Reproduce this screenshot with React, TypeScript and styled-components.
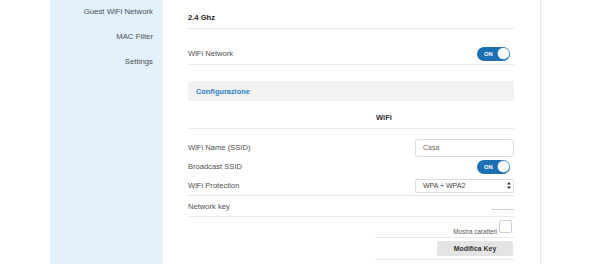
import React from "react";
import styled, { createGlobalStyle } from "styled-components";

const GlobalStyle = createGlobalStyle`
  html, body {
    margin: 0;
    padding: 0;
    background: #ffffff;
  }
  body {
    font-family: "Liberation Sans", Arial, sans-serif;
    width: 610px;
    height: 264px;
    overflow: hidden;
  }
`;

const Page = styled.div`
  display: flex;
  height: 264px;
`;

const Gutter = styled.div`
  width: 50px;
  flex: none;
`;

const Sidebar = styled.nav`
  width: 113px;
  flex: none;
  background: #e2f1fc;
  display: flex;
  flex-direction: column;
  align-items: flex-end;
  padding: 7px 10px 0 0;
  box-sizing: border-box;
`;

const NavItem = styled.div`
  font-size: 7.8px;
  color: #505050;
  height: 25px;
  line-height: 10px;
`;

const Main = styled.main`
  width: 378px;
  flex: none;
  border-right: 1px solid #e8e8e8;
  padding: 0 26px 0 25px;
  box-sizing: border-box;
`;

const Row = styled.div<{ $h: number; $top?: number; $line?: boolean }>`
  height: ${(p) => p.$h}px;
  padding-top: ${(p) => p.$top ?? 0}px;
  box-sizing: border-box;
  display: flex;
  align-items: center;
  justify-content: space-between;
  border-bottom: ${(p) => (p.$line ? "1px solid #e8e8e8" : "none")};
`;

const Title = styled.span`
  font-size: 7.6px;
  font-weight: bold;
  color: #222;
`;

const Label = styled.span`
  font-size: 7.6px;
  color: #505050;
`;

const Section = styled.div`
  margin-top: 16px;
  height: 20px;
  background: #f2f2f2;
  display: flex;
  align-items: center;
  padding-left: 8px;
  font-size: 7.4px;
  font-weight: bold;
  color: #2b7fc3;
`;

const Header = styled.div`
  height: 28px;
  padding: 6px 0 0 66px;
  box-sizing: border-box;
  display: flex;
  align-items: center;
  justify-content: center;
  border-bottom: 1px solid #e8e8e8;
  font-size: 7.6px;
  font-weight: bold;
  color: #333;
`;

const Toggle = styled.div`
  width: 33px;
  height: 14px;
  border-radius: 7px;
  background: #1d6fb4;
  display: flex;
  align-items: center;
  justify-content: space-between;
  padding: 0 1px 0 7px;
  margin-right: 4px;
  box-sizing: border-box;
  font-size: 5.8px;
  font-weight: bold;
  color: #fff;
`;

const Knob = styled.span`
  width: 11px;
  height: 11px;
  border-radius: 50%;
  background: #fff;
  box-shadow: 0 0 0 0.6px #7fbde9;
`;

const Field = styled.div`
  width: 99px;
  height: 18px;
  border: 1px solid #dcdcdc;
  border-radius: 3px;
  box-sizing: border-box;
  display: flex;
  align-items: center;
  justify-content: space-between;
  padding: 0 2px 0 7px;
  font-size: 7px;
  color: #666;
`;

const Select = styled(Field)`
  height: 14px;
  border-radius: 2px;
  color: #444;
`;

const Dots = styled.span`
  font-size: 7px;
  color: #444;
  letter-spacing: 0.1px;
  margin-top: 3px;
`;

const Footer = styled.div`
  display: flex;
  flex-direction: column;
  align-items: stretch;
  width: 139px;
  margin-left: auto;
`;

const FooterRow = styled.div<{ $h: number }>`
  height: ${(p) => p.$h}px;
  display: flex;
  align-items: center;
  justify-content: flex-end;
  border-bottom: 1px solid #e8e8e8;
  box-sizing: border-box;
`;

const Small = styled.span`
  font-size: 6.3px;
  color: #555;
  margin: 8px 2px 0 0;
`;

const Check = styled.span`
  width: 13px;
  height: 13px;
  border: 1px solid #d0d0d0;
  border-radius: 2px;
  box-sizing: border-box;
  margin: 0 2px 2px 0;
`;

const Button = styled.button`
  width: 76px;
  height: 15px;
  border: none;
  border-radius: 2px;
  background: #e4e4e4;
  font-family: "Liberation Sans", Arial, sans-serif;
  font-size: 6.9px;
  font-weight: bold;
  color: #333;
  padding: 0;
  margin-right: 1px;
`;

const Arrows = () => (
  <svg width="4" height="7" viewBox="0 0 4 7">
    <path d="M2 0 L4 2.5 L0 2.5 Z M2 7 L4 4.5 L0 4.5 Z" fill="#333" />
  </svg>
);

const Switch = () => (
  <Toggle>
    ON
    <Knob />
  </Toggle>
);

export default function App() {
  return (
    <>
      <GlobalStyle />
      <Page>
        <Gutter />
        <Sidebar>
          <NavItem>Guest WiFi Network</NavItem>
          <NavItem>MAC Filter</NavItem>
          <NavItem>Settings</NavItem>
        </Sidebar>
        <Main>
          <Row $h={29} $top={6} $line>
            <Title>2.4 Ghz</Title>
          </Row>
          <Row $h={36} $top={14} $line>
            <Label>WiFi Network</Label>
            <Switch />
          </Row>
          <Section>Configurazione</Section>
          <Header>WiFi</Header>
          <Row $h={28} $top={9}>
            <Label>WiFi Name (SSID)</Label>
            <Field>Casa</Field>
          </Row>
          <Row $h={19}>
            <Label>Broadcast SSID</Label>
            <Switch />
          </Row>
          <Row $h={20} $line>
            <Label>WiFi Protection</Label>
            <Select>
              WPA + WPA2
              <Arrows />
            </Select>
          </Row>
          <Row $h={21} $line>
            <Label>Network key</Label>
            <Dots>...........</Dots>
          </Row>
          <Footer>
            <FooterRow $h={21}>
              <Small>Mostra caratteri</Small>
              <Check />
            </FooterRow>
            <FooterRow $h={22}>
              <Button>Modifica Key</Button>
            </FooterRow>
          </Footer>
        </Main>
      </Page>
    </>
  );
}
